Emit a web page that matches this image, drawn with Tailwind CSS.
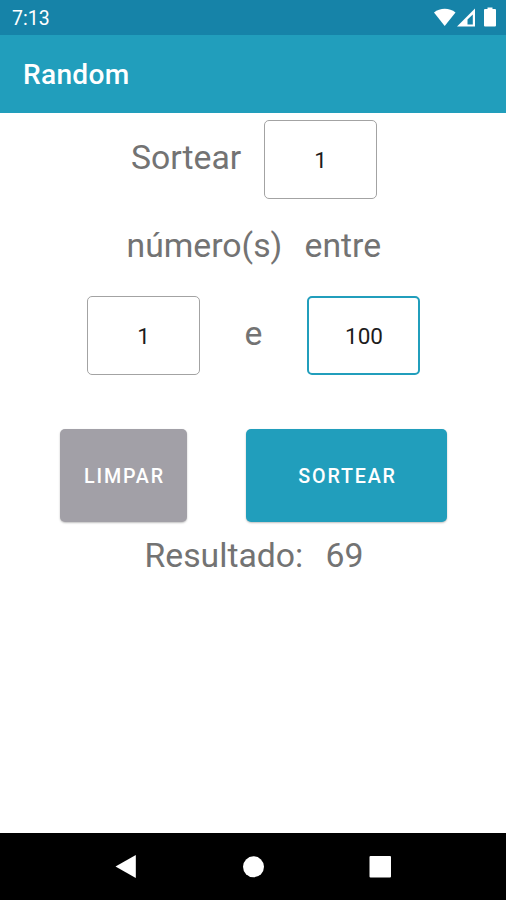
<!DOCTYPE html>
<html lang="pt-BR">
<head>
  <meta charset="UTF-8" />
  <meta name="viewport" content="width=device-width, initial-scale=1.0" />
  <title>Random</title>
  <script src="https://cdn.jsdelivr.net/npm/@tailwindcss/browser@4"></script>
</head>
<body class="bg-white font-['Roboto',sans-serif]">
  <div class="flex flex-col w-[506px] h-[900px] overflow-hidden">

    <!-- Status bar -->
    <div class="flex items-center justify-between h-[35px] pl-3 pr-[9px] bg-[#1683a8] text-white">
      <span class="text-[19.5px] leading-[35px] pt-0.5">7:13</span>
      <svg class="w-[64px] h-[35px]" viewBox="433 0 64 35" fill="#fff">
        <path d="M434 12.5C440 7.500 449.500 7.500 455.500 12.500L444.700 26Z" />
        <path fill-rule="evenodd" d="M457 26.500L475 8.500V26.500ZM467.500 24.500H472.800V14.500L467.500 19.500Z" />
        <path d="M487.500 7.500h5v1.500h2.500a1 1 0 0 1 1 1V25.500a1 1 0 0 1-1 1h-10a1 1 0 0 1-1-1V10a1 1 0 0 1 1-1h2.500z" />
      </svg>
    </div>

    <!-- App bar -->
    <header class="flex items-center h-[78px] px-[23px] bg-[#219ebc] text-white">
      <h1 class="text-[28.1px] font-medium leading-none tracking-[0.3px] pt-[3px]">Random</h1>
    </header>

    <form id="randomForm" class="flex flex-col grow pt-[7px] text-[33.75px] leading-10 text-[#737373]">
      <div class="flex items-start pl-[131px]">
        <label for="amount" class="w-[133px] pt-[18px]">Sortear</label>
        <input id="amount" type="text" value="1" class="w-[113px] h-[79px] pt-px border border-[#a3a3a3] rounded-[5px] text-center text-[22.5px] text-[#1c1c1c]" />
      </div>

      <div class="flex pl-[126.5px] mt-[27px]">
        <span class="w-[178px]">número(s)</span>
        <span>entre</span>
      </div>

      <div class="flex items-start pl-[87px] mt-[30px]">
        <input id="min" type="text" value="1" class="w-[113px] h-[79px] pt-px border border-[#a3a3a3] rounded-[5px] text-center text-[22.5px] text-[#1c1c1c]" />
        <label for="max" class="w-[107px] pt-[18px] text-center">e</label>
        <input id="max" type="text" value="100" class="w-[113px] h-[79px] pt-px pl-px border-[2.5px] border-[#219ebc] rounded-[5px] text-center text-[22.5px] text-[#1c1c1c]" />
      </div>

      <div class="flex gap-[59px] pl-[60px] mt-[54px] text-[19.7px] font-medium tracking-[1.8px] text-white">
        <button type="reset" class="w-[127px] h-[93px] pt-[3px] pl-0.5 rounded-[5px] bg-[#a2a0a7] shadow-[0_1px_2px_rgba(0,0,0,0.25)]">LIMPAR</button>
        <button type="submit" class="w-[201px] h-[93px] pt-[3px] pl-0.5 rounded-[5px] bg-[#219ebc] shadow-[0_1px_2px_rgba(0,0,0,0.25)]">SORTEAR</button>
      </div>

      <div class="flex pl-[144.5px] mt-[14px]">
        <span class="w-[181px]">Resultado:</span>
        <span id="result">69</span>
      </div>
    </form>

    <!-- Navigation bar -->
    <nav class="h-[67px] bg-black">
      <svg class="w-[506px] h-[67px]" viewBox="0 833 506 67" fill="#fff">
        <path d="M115.500 866.500L135.800 855V878Z" />
        <circle cx="253.500" cy="866.800" r="10.500" />
        <rect x="369.500" y="856" width="21.500" height="21.500" rx="1" />
      </svg>
    </nav>
  </div>
</body>
</html>
